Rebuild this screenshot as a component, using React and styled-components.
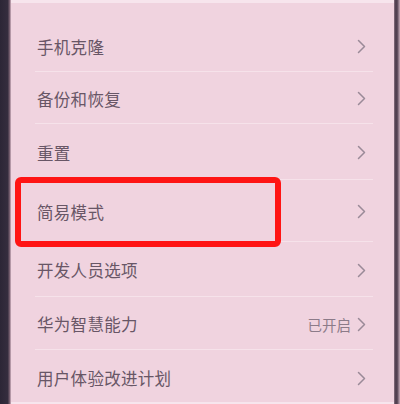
import React from "react";
import styled, { createGlobalStyle } from "styled-components";

const GlobalStyle = createGlobalStyle`
  * {
    box-sizing: border-box;
  }
  html, body {
    margin: 0;
    padding: 0;
    background: #f0d3df;
  }
  body {
    font-family: "Noto Sans CJK SC", "Noto Sans", sans-serif;
  }
`;

const items = [
  { label: "手机克隆", h: 52 },
  { label: "备份和恢复", h: 52 },
  { label: "重置", h: 56 },
  { label: "简易模式", h: 62, marked: true },
  { label: "开发人员选项", h: 55 },
  { label: "华为智慧能力", h: 53, value: "已开启" },
  { label: "用户体验改进计划", h: 54, last: true },
];

const App = () => {
  return (
    <>
      <GlobalStyle />
      <Phone>
        <LeftBezel />
        <Screen>
          <List>
            {items.map((it) => (
              <Row key={it.label} $h={it.h} $last={it.last}>
                <Label>{it.label}</Label>
                <Right>
                  {it.value && <Value>{it.value}</Value>}
                  <Chevron />
                </Right>
                {it.marked && <Highlight />}
              </Row>
            ))}
          </List>
        </Screen>
        <RightBezel />
      </Phone>
    </>
  );
};
export default App;

const Chevron = () => (
  <svg width="9" height="15" viewBox="0 0 9 15">
    <polyline
      points="1.5,1.5 7.5,7.5 1.5,13.5"
      fill="none"
      stroke="#9a8a98"
      strokeWidth="1.5"
      strokeLinecap="round"
      strokeLinejoin="round"
    />
  </svg>
);

const Phone = styled.div`
  width: 400px;
  height: 404px;
  display: flex;
  overflow: hidden;
`;

const LeftBezel = styled.div`
  width: 11px;
  flex-shrink: 0;
  background: linear-gradient(
    to right,
    #2c2636 0%,
    #352d3e 70%,
    #7a6272 88%,
    #d8b9c7 100%
  );
`;

const RightBezel = styled.div`
  width: 6px;
  flex-shrink: 0;
  background: linear-gradient(
    to right,
    #8a7282 0%,
    #4a3a4a 30%,
    #5a4858 55%,
    #c9aebb 100%
  );
`;

const Screen = styled.div`
  flex: 1;
  background: #f0d3df;
  border-top: 3px solid #f7e5ed;
  border-bottom: 2px solid #f7e5ed;
  padding-top: 17px;
`;

const List = styled.div`
  display: flex;
  flex-direction: column;
`;

const Row = styled.div`
  position: relative;
  height: ${({ $h }) => $h}px;
  margin: 0 21px 0 24px;
  padding: 2px 7px 0 2px;
  display: flex;
  align-items: center;
  justify-content: space-between;
  border-bottom: ${({ $last }) => ($last ? "none" : "1px solid #f6e2ea")};
`;

const Label = styled.div`
  font-size: 16.5px;
  color: #685666;
  letter-spacing: 0.3px;
`;

const Right = styled.div`
  display: flex;
  align-items: center;
  gap: 6px;
`;

const Value = styled.div`
  font-size: 14.5px;
  color: #8c7b89;
`;

const Highlight = styled.div`
  position: absolute;
  left: -20px;
  top: -3px;
  width: 266px;
  height: 70px;
  border: 6px solid #ff1414;
  border-radius: 6px;
  pointer-events: none;
`;
